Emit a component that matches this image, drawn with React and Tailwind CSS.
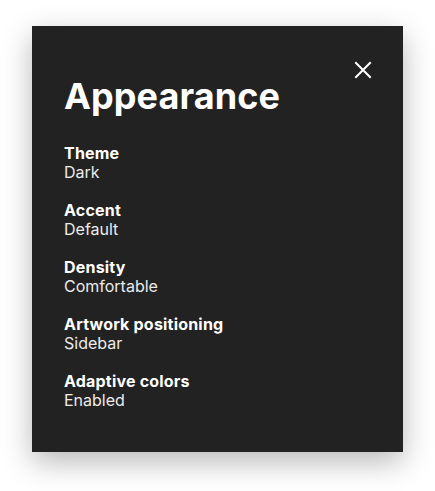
import React from 'react';

const SETTINGS = [
  { label: 'Theme', value: 'Dark' },
  { label: 'Accent', value: 'Default' },
  { label: 'Density', value: 'Comfortable' },
  { label: 'Artwork positioning', value: 'Sidebar' },
  { label: 'Adaptive colors', value: 'Enabled' },
];

const App = () => {
  return (
    <div className="w-full h-[491px] bg-white pl-[32px] pt-[26px] font-['Inter',sans-serif]">
      <div className="relative w-[371px] h-[426px] bg-[#222222] text-white pl-[32px] pt-[50px] shadow-[0_10px_28px_rgba(0,0,0,0.28)]">
        {/* close */}
        <button className="absolute top-[28px] right-[24px] w-[32px] h-[32px] flex items-center justify-center">
          <svg width="18" height="18" viewBox="0 0 18 18" fill="none" stroke="white" strokeWidth="2" strokeLinecap="square">
            <path d="M2 2 L16 16 M16 2 L2 16" />
          </svg>
        </button>

        <h1 className="text-[36px] leading-[40px] font-bold tracking-[0.1px] mb-[28px]">Appearance</h1>

        <div className="flex flex-col gap-[19px]">
          {SETTINGS.map((s) => (
            <div key={s.label} className="flex flex-col text-[16px] leading-[19px]">
              <span className="font-bold tracking-[0.2px]">{s.label}</span>
              <span className="text-[#ececec]">{s.value}</span>
            </div>
          ))}
        </div>
      </div>
    </div>
  );
};

export default App;
